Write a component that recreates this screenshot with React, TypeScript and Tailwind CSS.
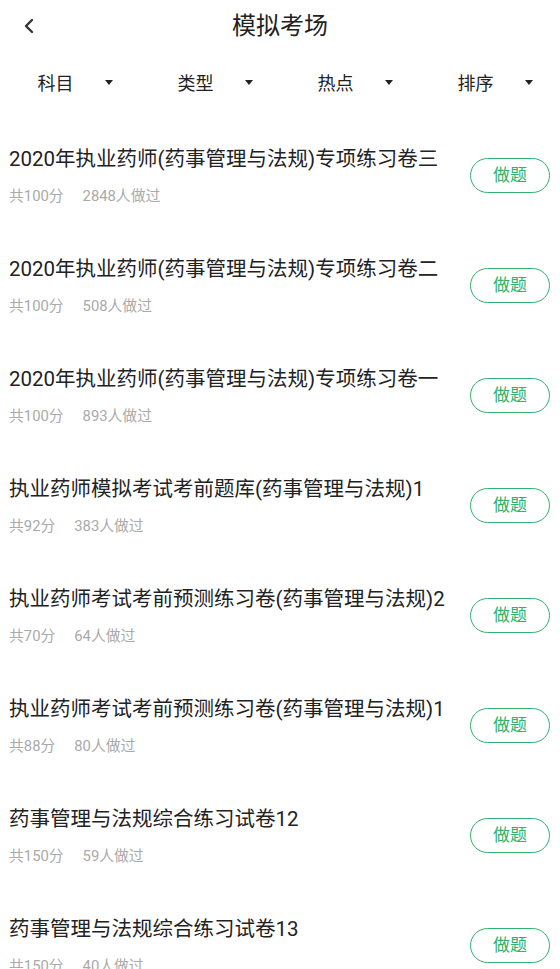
import { ChevronLeft } from "lucide-react";

// ─── Data ────────────────────────────────────────────────────────────────────

interface Paper {
  title: string;
  score: number;
  count: number;
}

const FILTERS = ["科目", "类型", "热点", "排序"];

const PAPERS: Paper[] = [
  { title: "2020年执业药师(药事管理与法规)专项练习卷三", score: 100, count: 2848 },
  { title: "2020年执业药师(药事管理与法规)专项练习卷二", score: 100, count: 508 },
  { title: "2020年执业药师(药事管理与法规)专项练习卷一", score: 100, count: 893 },
  { title: "执业药师模拟考试考前题库(药事管理与法规)1", score: 92, count: 383 },
  { title: "执业药师考试考前预测练习卷(药事管理与法规)2", score: 70, count: 64 },
  { title: "执业药师考试考前预测练习卷(药事管理与法规)1", score: 88, count: 80 },
  { title: "药事管理与法规综合练习试卷12", score: 150, count: 59 },
  { title: "药事管理与法规综合练习试卷13", score: 150, count: 40 },
];

// ─────────────────────────────────────────────────────────────────────────────

export default function App() {
  return (
    <div className="w-[560px] h-[969px] overflow-hidden bg-white font-['Roboto','Noto_Sans_CJK_SC',sans-serif]">
      {/* ── Header ─────────────────────────────────────────────────────── */}
      <header className="relative h-[52px] flex items-center justify-center">
        <button className="absolute left-[17px] top-[14px] text-[#333]">
          <ChevronLeft className="h-6 w-6" strokeWidth={2.4} />
        </button>
        <h1 className="text-[24px] text-[#222] leading-none">模拟考场</h1>
      </header>

      {/* ── Filters ────────────────────────────────────────────────────── */}
      <div className="grid grid-cols-4 h-[64px]">
        {FILTERS.map((f) => (
          <div key={f} className="flex items-center justify-center pl-[10px] gap-[31px]">
            <span className="text-[18px] text-[#222] leading-none">{f}</span>
            <span className="-mt-[4px] w-0 h-0 border-l-[4px] border-r-[4px] border-t-[5px] border-l-transparent border-r-transparent border-t-[#222]" />
          </div>
        ))}
      </div>

      {/* ── List ───────────────────────────────────────────────────────── */}
      <ul className="pt-[4px]">
        {PAPERS.map((p) => (
          <li key={p.title} className="h-[110px] flex items-center pl-[9px] pr-[10px]">
            <div className="flex-1 min-w-0 flex flex-col">
              <p className="text-[20.5px] leading-[28px] text-[#222] whitespace-nowrap">{p.title}</p>
              <p className="mt-[13px] text-[14.8px] leading-[20px] text-[#aaa] flex gap-[19px]">
                <span>共{p.score}分</span>
                <span>{p.count}人做过</span>
              </p>
            </div>
            <button className="w-[80px] h-[35px] rounded-full border-[1.5px] border-[#2fb36c] text-[#2fb36c] text-[17px] leading-none flex items-center justify-center">
              做题
            </button>
          </li>
        ))}
      </ul>
    </div>
  );
}
